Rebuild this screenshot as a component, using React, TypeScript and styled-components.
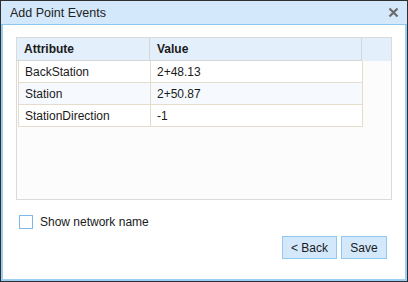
import React from "react";
import styled, { createGlobalStyle } from "styled-components";

const Global = createGlobalStyle`
  html, body { margin: 0; padding: 0; background: #fff; }
  body { font-family: "Liberation Sans", Arial, sans-serif; }
  * { box-sizing: border-box; }
`;

const Dialog = styled.div`
  width: 408px;
  height: 282px;
  border: 1px solid #2f2f2f;
  display: flex;
  flex-direction: column;
  background: #fff;
`;

const TitleBar = styled.div`
  height: 24px;
  flex: none;
  background: #d3e8fb;
  border-bottom: 1px solid #8ec7f2;
  display: flex;
  align-items: center;
  justify-content: space-between;
  padding: 0 8px 0 9px;
`;

const Title = styled.div`
  font-size: 12.5px;
  color: #222;
`;

const CloseBtn = styled.button`
  border: none;
  background: none;
  padding: 0;
  width: 11px;
  height: 11px;
  display: flex;
  cursor: pointer;
`;

const Body = styled.div`
  flex: 1;
  border: 2px solid #9ccdf3;
  border-top: none;
  display: flex;
  flex-direction: column;
  padding: 12px 13px 20px 13px;
`;

const Grid = styled.div`
  height: 163px;
  border: 1px solid #dadada;
  background: #fcfcfc;
  display: flex;
  flex-direction: column;
`;

const HeaderRow = styled.div`
  display: grid;
  grid-template-columns: 133px 212px 1fr;
  height: 23px;
  background: #e3f0fb;
`;

const HeaderCell = styled.div<{ $filler?: boolean }>`
  font-size: 12px;
  font-weight: bold;
  color: #1a1a1a;
  display: flex;
  align-items: center;
  padding-left: 7px;
  border-right: ${(p) => (p.$filler ? "none" : "1px solid #d6d6d6")};
  border-bottom: ${(p) => (p.$filler ? "none" : "1px solid #d6d6d6")};
`;

const Rows = styled.div`
  width: 346px;
  display: flex;
  flex-direction: column;
  padding-left: 1px;
`;

const Row = styled.div<{ $alt?: boolean }>`
  display: grid;
  grid-template-columns: 132px 1fr;
  height: 22px;
  background: ${(p) => (p.$alt ? "#f6faff" : "#fff")};
  border: 1px solid #e6dccb;
  border-top: none;
`;

const Cell = styled.div<{ $last?: boolean }>`
  font-size: 12px;
  color: #1a1a1a;
  display: flex;
  align-items: center;
  padding-left: 6px;
  border-right: ${(p) => (p.$last ? "none" : "1px solid #e6dccb")};
`;

const CheckRow = styled.label`
  display: flex;
  align-items: center;
  gap: 7px;
  margin-top: 15px;
  margin-left: 3px;
  font-size: 12px;
  color: #1a1a1a;
`;

const Box = styled.span`
  width: 14px;
  height: 14px;
  border: 1px solid #7cb9ea;
  background: #fff;
  display: inline-block;
`;

const Footer = styled.div`
  margin-top: auto;
  display: flex;
  justify-content: flex-end;
  gap: 4px;
  padding-right: 5px;
`;

const Button = styled.button<{ $w: number }>`
  width: ${(p) => p.$w}px;
  height: 23px;
  background: #d3e8fb;
  border: 1px solid #92c9f3;
  font-family: "Liberation Sans", Arial, sans-serif;
  font-size: 12px;
  color: #1a1a1a;
  padding: 0;
  cursor: pointer;
`;

const rows = [
  ["BackStation", "2+48.13"],
  ["Station", "2+50.87"],
  ["StationDirection", "-1"],
];

export default function App() {
  return (
    <>
      <Global />
      <Dialog>
        <TitleBar>
          <Title>Add Point Events</Title>
          <CloseBtn aria-label="Close">
            <svg width="11" height="11" viewBox="0 0 11 11">
              <path d="M1.5 1.5 L9.5 9.5 M9.5 1.5 L1.5 9.5" stroke="#6b6b6b" strokeWidth="2.2" />
            </svg>
          </CloseBtn>
        </TitleBar>
        <Body>
          <Grid>
            <HeaderRow>
              <HeaderCell>Attribute</HeaderCell>
              <HeaderCell>Value</HeaderCell>
              <HeaderCell $filler />
            </HeaderRow>
            <Rows>
              {rows.map(([a, v], i) => (
                <Row key={a} $alt={i === 1}>
                  <Cell>{a}</Cell>
                  <Cell $last>{v}</Cell>
                </Row>
              ))}
            </Rows>
          </Grid>
          <CheckRow>
            <Box />
            Show network name
          </CheckRow>
          <Footer>
            <Button $w={55}>&lt; Back</Button>
            <Button $w={46}>Save</Button>
          </Footer>
        </Body>
      </Dialog>
    </>
  );
}
